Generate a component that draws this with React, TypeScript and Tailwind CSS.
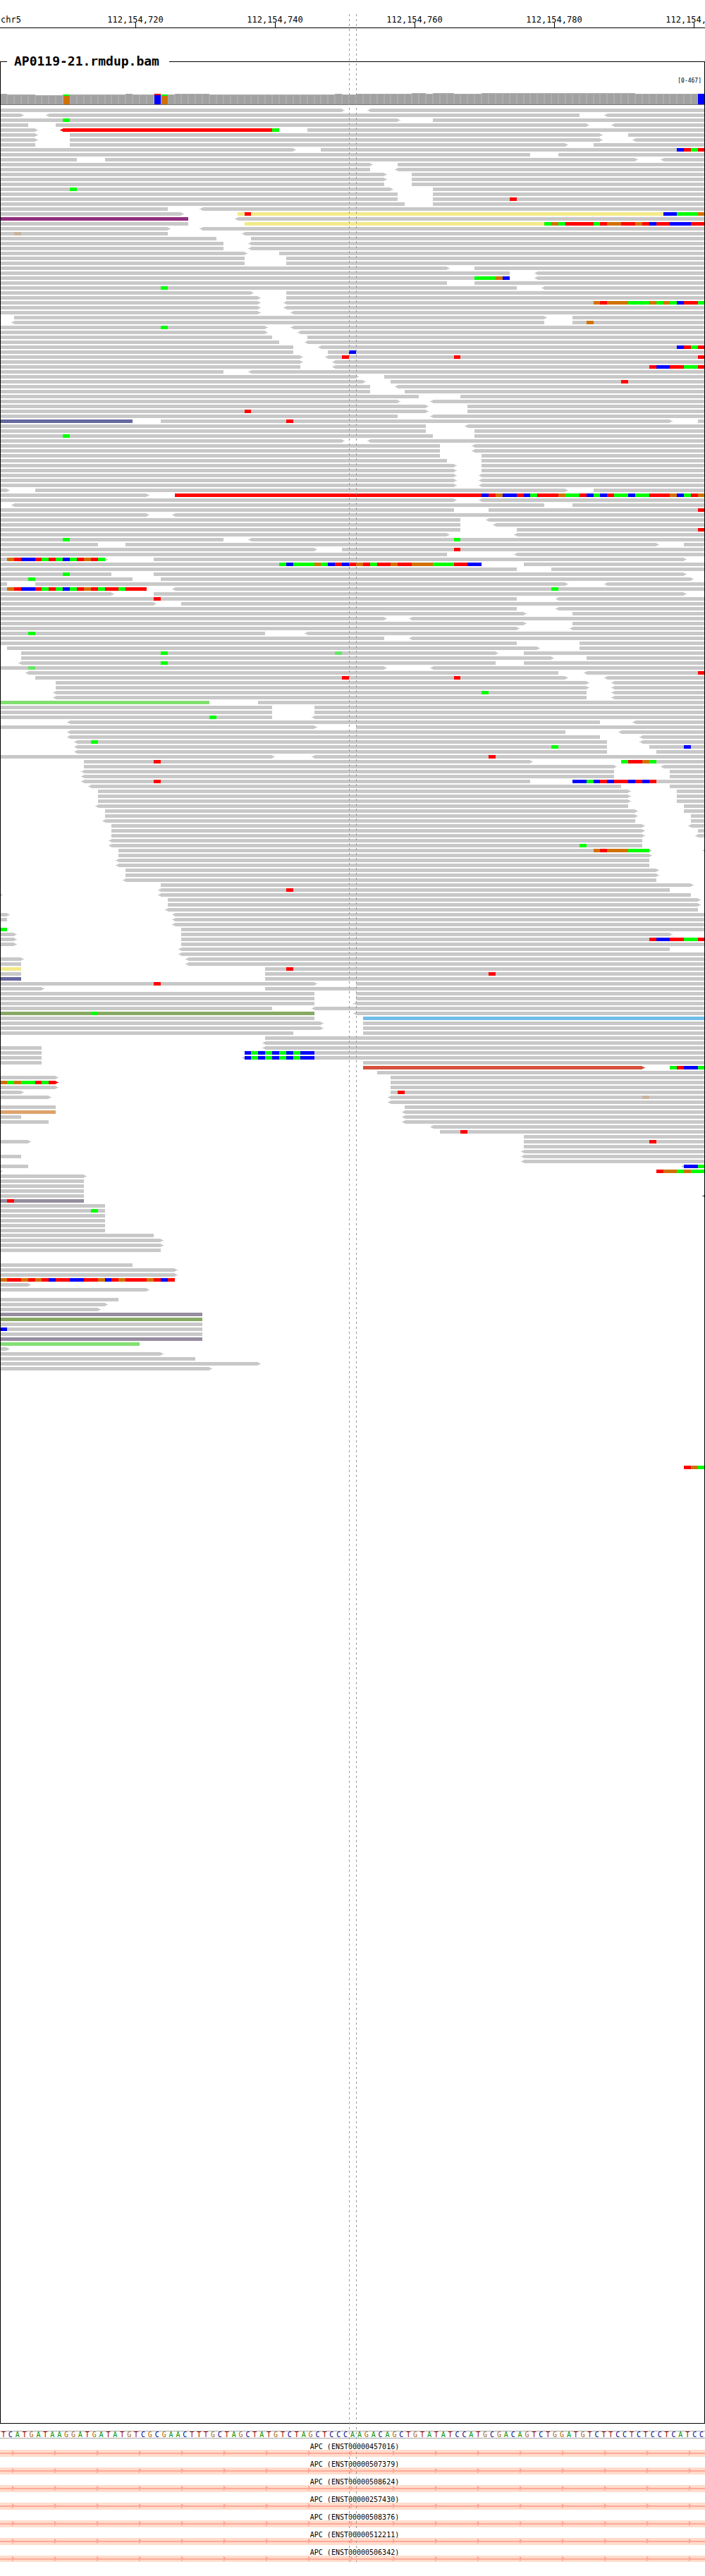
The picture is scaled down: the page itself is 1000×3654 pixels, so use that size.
import React from "react";

const COLUMNS = 101;
const VIEW_WIDTH = 1000;
const ROW_PITCH = 7;
const ROW_COUNT = 469;

const READ_COLORS: Record<string, string> = {
  "": "#c8c8c8",
  R: "#ff0000",
  Y: "#f2ea8b",
  P: "#922e80",
  S: "#66689e",
  L: "#82df71",
  O: "#88a964",
  B: "#70bde8",
  K: "#d64f3a",
  T: "#dda36a",
  M: "#968da0",
};

const BASE_COLORS: Record<string, string> = {
  g: "#00ff00",
  r: "#ff0000",
  b: "#0000ff",
  o: "#d17105",
  l: "#64e764",
  t: "#cab39d",
};

/*
 * One line per alignment row. A read is written start-end in base columns
 * (omitted ends run to the window edge), "<" or ">" marks the strand tip and a
 * capital letter the read colour. "@col" followed by letters lists mismatches.
 */
const READS = `-49> <53-
-3> <7-83 <87-
-57> 62- @9g
-4 8-84> <88-
-5> <9-39R @39g 44-
-5> 10-86> 90-
-5> 10-86> <91-
-5 10-81> 85-
-42> 46- @97brgr
-76 80-
-11 15-91> <95-
-53> 57-
-53 <57-
-55> 59-
-55> 59-
-55 59-
-56> 62- @10g
-57 62-
-57 62- @73r
-58 62-
-24 <29-
-26> 34-Y @35r @95bbgggo
-27P <34-
-27 35-Y @78gogrrrrgroorrorbrrbbbrr
-24> <29-
-24 <35- @2t
-31 36-
-32 <36-
-32 <36-
-35> 40-
-35 41-
-35 41-
-64> 68-
-73 <77-
-73 <77- @68gggob
-64 68-
-74 <78- @23g
-36> 41-
-37> 41-
-37> <41- @85orooogggogogbrrg
-37> <41-
-37> <42-
2-78> 82-
<2-78 82- @84o
-38> <42- @23g
-38> <43-
-39 44-
-40 <44-
-42 <46- @97brgr
-42 47- @50b
-43> <47- @49r @65r @100r
-43> <48-
-43 <48- @93rbbrrggr
-32 <36-
-51> 55-
-52> 56- @89r
-53 <57-
-53 58-
-60 66-
-57> <62-
-61> 67-
-61> 67- @35r
-57 <62-
-19S 23-96> 100- @41r
-61 <67-
-61 68-
-62 68- @9g
-49> <53-
-63 <68-
-63 <68-
-63 69-
-64 69-
-65> 69-
-65> 69-
-65> <69-
-65> <69-
-65> <69-
-1> 5-81> 85-
-21> 25-R @69brobbrbgrrroggrbgbrggbggrrrobgro
-65> <69-
<2-78 82-
-65 70- @100r
-21> <25-
-66 <70-
-66 <71-
-66 74- @100r
-64> <74-
-32 <36- @9g @65g
-14 18-94> 98-
-45> 49- @65r
-64 <74-
-15> 22-98> @1orbbrgrgbgrorg
-69 75- @40gbgggogbrbrorgrrorrooogggrrbb
-74 79-
-16 22-98> @9g
-19 23-99> @4g
-1 5-81> <87-
-21 <25- @1orbbrgrgbgrorgrrgrrr @79g
-16> 22-98>
-74 <80- @22r
-22> 26-
-74 <80-
-75> 82-
-55> <59-
-75> 82-
-74> <82-
-38 <44- @4g
-55 <59-
-74 83-
1-77> 83-
3-71> 75- @23g @48l
3-79> 84-
<3-71 75- @23g
-55> <62- @4l
<4-80 <84- @100r
5-81> <87- @49r @65r
8-84> <88-
8-84> <88-
<8-84 <88- @69g
<8-84 <88-
-30L 37-
-39 45-
-39 45-
-39 <45- @30g
<10-86 <91-
-45> 51-
<10-81 <89-
<10-86 <92-
<11-87 <92- @13g
<11-87 93- @79g @98b
<11-87 94-
-39> <45- @70r
12-76> 89- @22r @89grrog
12-88> <95-
<12-88 96-
<12-88 96-
<12-76 82- @22r @82bbgbrbrrbrbr
<13-89 96-
14-90> 97-
14-90> 97-
14-90> 97-
<14-90 98-
15-91> 98-
15-91> 99-
<15-91 99-
16-92> <99-
16-92> 100-
16-92> <100-
<16-92
<16-92 @83g
17-93> <101- @85oroooggg
17-93>
<17-93
<17-93
18-94>
18-94>
<18-94
23-99>
<23-96 @41r
-0> <23-99
24-100>
24-100>
<24-100
-1> <25-
-1 <25-
<25-
-1 26- @0g
-2> 26-96>
-2> 26- @93rbbrrggr
-2> 26-
<26-96
<26-
-3> <27-
-3 <27-
-3Y 38- @41r
-3 38- @70r
-3S 38-
-45> 51- @22r
-6> 38-
-45 51-
-45 51-
-45 <51-
-39 <45-
-45O <51- @13g
-45 52-B
-46> 52-
-46> 52-
-42 52-
38-
<38-
-6 <38-
-6 35- @35bgbgbgbgbb
-6 <35- @35bgbgbgbgbb
-6 52-
52-92>K @96grbbg
54-
-8> 56-
-8>R 56- @0ogoggrgr
-8> 56-
-3> 56- @57r
-7> <56- @92t
<56-
-8 58-
-8T <58-
-3 <58-
-7 <58-
<62-
63- @66r
75-
-4> 75- @93r
75-
<75-
-3 <75-
<75-
-4 <98- @98bbg
-0> @94roogogg
-12>
-12
-12
-12
-12 <101-S
-12M @1r
-15
-15 @13g
-15
-15
-15
-15
-22
-23>
-23>
-23
.
.
-19
-25>
-25>
-25 @0orrororbrrbbrrobrorrrorbr
-4>
-21>
.
-17
-15>
-14>
-29M
-29O
-29
-29 @0b
-29
-29M
-20L
-1>
-23>
-28
-37>
-30>
.
.
.
.
.
.
.
.
.
.
.
.
.
.
.
.
.
.
.
@98rog`.split("\n");

const SEQUENCE =
  "TCATGATAAGGATGATATGTCGCGAACTTTGCTAGCTATGTCTAGCTCCC" +
  "A" +
  "AGACAGCTGTATATCCATGCGACAGTCTGGATGTCTTCCTCTCCTCATCC";

const NUCLEOTIDE_CLASS: Record<string, string> = {
  A: "text-[#009000]",
  C: "text-[#00008b]",
  G: "text-[#a86410]",
  T: "text-[#a00000]",
};

const TRANSCRIPTS = [
  "ENST00000457016",
  "ENST00000507379",
  "ENST00000508624",
  "ENST00000257430",
  "ENST00000508376",
  "ENST00000512211",
  "ENST00000506342",
];

const AXIS_LABELS = [
  "112,154,720",
  "112,154,740",
  "112,154,760",
  "112,154,780",
  "112,154,800",
];

const columnX = (column: number) => Math.round((column * VIEW_WIDTH) / COLUMNS);

function tip(x: number, y: number, direction: 1 | -1, color: string, key: string) {
  const near = direction === 1 ? x : x - 2;
  const far = direction === 1 ? x + 2 : x - 4;
  return (
    <g key={key} fill={color}>
      <rect x={near} y={y + 1} width={2} height={3} />
      <rect x={far} y={y + 2} width={2} height={1} />
    </g>
  );
}

function readShapes(line: string, row: number) {
  const y = row * ROW_PITCH;
  const shapes: React.ReactNode[] = [];
  line.split(" ").forEach((token, index) => {
    const key = `${row}-${index}`;
    const mismatch = /^@(\d+)([a-z]+)$/.exec(token);
    if (mismatch) {
      const first = Number(mismatch[1]);
      mismatch[2].split("").forEach((base, offset) => {
        const x = columnX(first + offset);
        shapes.push(
          <rect
            key={`${key}-${offset}`}
            x={x}
            y={y}
            width={columnX(first + offset + 1) - x}
            height={5}
            fill={BASE_COLORS[base]}
          />,
        );
      });
      return;
    }
    const read = /^(<?)(\d*)-(\d*)(>?)([A-Z]?)$/.exec(token);
    if (!read) return;
    const x = columnX(read[2] ? Number(read[2]) : 0);
    const end = columnX(read[3] ? Number(read[3]) : COLUMNS);
    const color = READ_COLORS[read[5]];
    shapes.push(<rect key={key} x={x} y={y} width={end - x} height={5} fill={color} />);
    if (read[1]) shapes.push(tip(x, y, -1, color, `${key}-l`));
    if (read[4]) shapes.push(tip(end, y, 1, color, `${key}-r`));
  });
  return shapes;
}

function ReadPileup() {
  return (
    <svg
      className="block h-auto w-full"
      viewBox={`1 0 ${VIEW_WIDTH - 2} ${ROW_COUNT * ROW_PITCH}`}
      shapeRendering="crispEdges"
      role="img"
      aria-label="Aligned reads"
    >
      {READS.map(readShapes)}
    </svg>
  );
}

function coverageTop(column: number) {
  const within = (from: number, to: number) => column >= from && column <= to;
  if (within(59, 60) || within(62, 64) || within(69, 90)) return 0;
  if (column === 0 || column === 18 || column === 22 || within(25, 29) || column === 48) return 1;
  if (column >= 51) return 1;
  if (within(5, 8)) return 3;
  return 2;
}

const VARIANTS: Record<number, [string, string]> = {
  9: ["#d17105", "#00ff00"],
  22: ["#0000ff", "#ff0000"],
  23: ["#d17105", "#00ff00"],
  100: ["#0000ff", "#0000ff"],
};

function Coverage() {
  return (
    <svg
      className="block h-[17px] w-full"
      viewBox="1 0 998 17"
      preserveAspectRatio="none"
      shapeRendering="crispEdges"
      role="img"
      aria-label="Coverage"
    >
      {Array.from({ length: COLUMNS }, (_, column) => {
        const x = columnX(column);
        const width = columnX(column + 1) - x;
        const top = coverageTop(column);
        const variant = VARIANTS[column];
        if (variant) {
          return (
            <g key={column}>
              <rect x={x} y={top} width={width} height={16 - top} fill="#b0b0b0" />
              <rect x={x + 1 - (column === 100 ? 1 : 0)} y={top} width={9} height={16 - top} fill={variant[0]} />
              <rect x={x + 1 - (column === 100 ? 1 : 0)} y={top} width={9} height={2} fill={variant[1]} />
              {column === 100 && <rect x={x + 4} y={top} width={1} height={1} fill="#ff0000" />}
            </g>
          );
        }
        return (
          <g key={column}>
            <rect x={x} y={top} width={width} height={16 - top} fill="#adadad" />
            <rect x={x + 1} y={top + 1} width={width - 2} height={15 - top} fill="#a1a1a1" />
          </g>
        );
      })}
      <rect x={0} y={16} width={VIEW_WIDTH} height={1} fill="#787878" />
    </svg>
  );
}

function Axis() {
  return (
    <header className="flex h-10 items-stretch overflow-hidden border-b border-black pt-5 text-xs">
      <span className="w-[9.3%] shrink-0 pl-px">chr5</span>
      {AXIS_LABELS.map((label) => (
        <span key={label} className="relative w-[19.8%] shrink-0 text-center">
          {label}
          <span className="absolute bottom-0 left-1/2 h-[7px] w-px bg-black" />
        </span>
      ))}
    </header>
  );
}

function Sequence() {
  return (
    <div className="mt-[10px] grid h-[11px] grid-cols-[repeat(101,minmax(0,1fr))] border-y border-[#a8a8a8] text-center text-[10px] leading-[9px]">
      {SEQUENCE.split("").map((base, index) => (
        <span key={index} className={NUCLEOTIDE_CLASS[base]}>
          {base}
        </span>
      ))}
    </div>
  );
}

function Transcript({ id }: { id: string }) {
  return (
    <li className="flex flex-col">
      <span className="h-[15px] pl-[6px] text-center text-[10px] leading-[22px]">APC ({id})</span>
      <svg
        className="block h-[10px] w-full bg-[#ffdccc]"
        viewBox="0 0 1000 10"
        preserveAspectRatio="none"
        shapeRendering="crispEdges"
        aria-hidden="true"
      >
        <rect x={0} y={4} width={1000} height={2} fill="#ffa898" />
        {Array.from({ length: 17 }, (_, index) => (
          <g key={index} fill="#ffa898">
            <rect x={17 + index * 60} y={1} width={1} height={7} />
            <rect x={18 + index * 60} y={2} width={1} height={5} />
            <rect x={19 + index * 60} y={3} width={1} height={3} />
          </g>
        ))}
      </svg>
    </li>
  );
}

const GUIDE =
  "pointer-events-none absolute top-5 bottom-0 w-px bg-[repeating-linear-gradient(to_bottom,#969696_0px,#969696_3px,transparent_3px,transparent_7px)]";

export default function App() {
  return (
    <div className="min-h-screen bg-white pb-5 font-['DejaVu_Sans_Mono',monospace] text-black">
      <main className="relative overflow-hidden">
        <Axis />
        <fieldset className="mt-[33px] min-w-0 border border-black">
          <legend className="ml-[9px] w-[230px] pl-[10px] text-lg leading-7 font-bold">
            AP0119-21.rmdup.bam
          </legend>
          <p className="h-[31px] pr-1 text-right text-[8px] leading-[28px]">[0-467]</p>
          <Coverage />
          <div className="pt-[5px]">
            <ReadPileup />
          </div>
        </fieldset>
        <Sequence />
        <ul className="mb-[-1px] pt-px">
          {TRANSCRIPTS.map((id) => (
            <Transcript key={id} id={id} />
          ))}
        </ul>
        <div className={`${GUIDE} left-[49.5%]`} />
        <div className={`${GUIDE} left-[50.5%]`} />
      </main>
    </div>
  );
}
